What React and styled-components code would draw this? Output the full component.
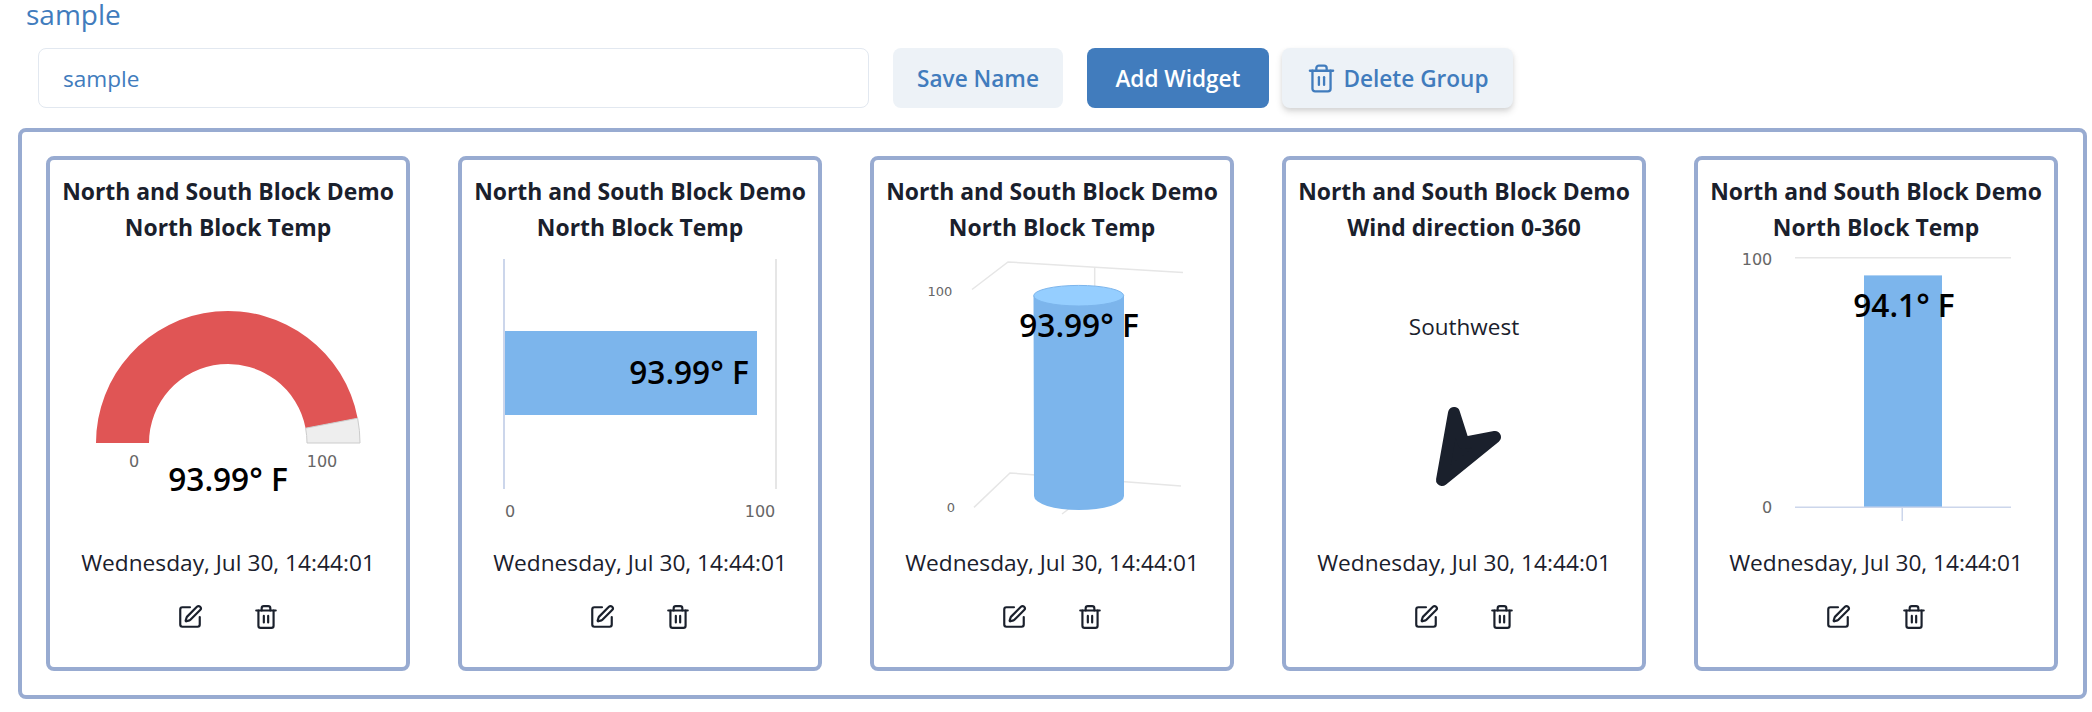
import React from "react";
import styled, { createGlobalStyle } from "styled-components";
import { SquarePen, Trash2 } from "lucide-react";

const FONT = `"Open Sans", "Noto Sans", "Liberation Sans", sans-serif`;
const BLUE = "#417cbd";
const BAR = "#7cb5ec";

const Global = createGlobalStyle`
  html, body { margin: 0; padding: 0; background: #fff; }
  body { font-family: ${FONT}; color: #1a202c; }
`;

const Page = styled.div`
  width: 2092px;
  height: 712px;
  overflow: hidden;
`;
const GroupTitle = styled.h2`
  margin: 0;
  height: 48px;
  padding: 0 0 0 26px;
  font-size: 28px;
  line-height: 28px;
  font-weight: 400;
  color: ${BLUE};
`;
const Toolbar = styled.div`
  display: flex;
  align-items: stretch;
  height: 60px;
  margin: 0 0 20px 38px;
`;
const NameInput = styled.input`
  box-sizing: border-box;
  width: 831px;
  height: 60px;
  padding: 0 24px;
  margin-right: 24px;
  border: 1.5px solid #e2e8f0;
  border-radius: 8px;
  outline: none;
  font: 400 22.6px ${FONT};
  color: ${BLUE};
`;
const Button = styled.button`
  box-sizing: border-box;
  display: flex;
  align-items: center;
  justify-content: center;
  gap: 6px;
  width: ${(p) => p.$w}px;
  margin-right: ${(p) => p.$mr || 0}px;
  padding: 0;
  border: 0;
  border-radius: 8px;
  font: 600 22.6px ${FONT};
  background: ${(p) => (p.$primary ? BLUE : "#edf2f7")};
  color: ${(p) => (p.$primary ? "#fff" : BLUE)};
  box-shadow: ${(p) => (p.$raised ? "0 4px 7px rgba(0,0,0,.13), 0 2px 4px rgba(0,0,0,.06)" : "none")};
`;
const Panel = styled.section`
  box-sizing: border-box;
  width: 2069px;
  height: 571px;
  margin-left: 18px;
  padding: 24px;
  border: 4px solid #98abd1;
  border-radius: 8px;
  display: grid;
  grid-template-columns: repeat(5, 364px);
  column-gap: 48px;
`;
const Card = styled.article`
  box-sizing: border-box;
  height: 515px;
  border: 4px solid #98abd1;
  border-radius: 8px;
  padding-top: 14px;
  display: flex;
  flex-direction: column;
  align-items: center;
`;
const CardTitle = styled.h3`
  margin: 0;
  height: 76px;
  font-size: 22.9px;
  line-height: 36px;
  font-weight: 700;
  text-align: center;
  white-space: nowrap;
  color: #1a202c;
`;
const ChartBox = styled.div`
  position: relative;
  width: 356px;
  height: 280px;
`;
const ChartSvg = styled.svg`
  display: block;
  width: 356px;
  height: 280px;
`;
const AxisText = styled.text`
  font-family: "DejaVu Sans", sans-serif;
  font-size: ${(p) => p.$size || 16}px;
  fill: #666;
  text-anchor: middle;
  dominant-baseline: central;
`;
const Value = styled.div`
  position: absolute;
  left: ${(p) => p.$x}px;
  top: ${(p) => p.$y}px;
  transform: translate(-50%, -50%);
  font-size: 31.6px;
  line-height: 40px;
  font-weight: 600;
  color: #000;
  white-space: nowrap;
`;
const Direction = styled.div`
  position: absolute;
  left: 178px;
  top: 77px;
  transform: translate(-50%, -50%);
  font-size: 22.5px;
  line-height: 30px;
  white-space: nowrap;
`;
const Timestamp = styled.div`
  margin-top: 17px;
  font-size: 22.7px;
  line-height: 32px;
  white-space: nowrap;
`;
const Actions = styled.div`
  display: flex;
  gap: 50px;
  margin-top: 25px;
  color: #1a202c;
`;

const polar = (r, pct) => {
  const a = (pct / 100) * Math.PI;
  return [178 - r * Math.cos(a), 193 - r * Math.sin(a)];
};
const arcSeg = (R, r, from, to) => {
  const [a, b] = polar(R, from);
  const [c, d] = polar(R, to);
  const [e, f] = polar(r, to);
  const [g, h] = polar(r, from);
  return `M${a} ${b}A${R} ${R} 0 0 1 ${c} ${d}L${e} ${f}A${r} ${r} 0 0 0 ${g} ${h}Z`;
};

const Gauge = () => (
  <ChartBox>
    <ChartSvg viewBox="0 0 356 280">
      <path d={arcSeg(132, 79, 0, 93.99)} fill="#e05555" />
      <path d={arcSeg(132, 79, 93.99, 100)} fill="#eeeeee" stroke="#cccccc" strokeWidth="1" />
      <AxisText x="84" y="211">0</AxisText>
      <AxisText x="272" y="211">100</AxisText>
    </ChartSvg>
    <Value $x={178} $y={229}>93.99° F</Value>
  </ChartBox>
);

const HBar = () => (
  <ChartBox>
    <ChartSvg viewBox="0 0 356 280">
      <rect x="41" y="9" width="2" height="230" fill="#ccd6eb" />
      <rect x="313" y="9" width="2" height="230" fill="#e6e6e6" />
      <rect x="43" y="81" width="252" height="84" fill={BAR} />
      <AxisText x="48" y="261">0</AxisText>
      <AxisText x="298" y="261">100</AxisText>
    </ChartSvg>
    <Value $x={227} $y={122}>93.99° F</Value>
  </ChartBox>
);

const Cylinder = () => (
  <ChartBox>
    <ChartSvg viewBox="0 0 356 280">
      <g fill="none" stroke="#e6e6e6" strokeWidth="1.5">
        <path d="M98 39.5L134 12L309 22.6" />
        <path d="M100 257.4L136 223L307 236" />
        <path d="M220.7 17V60" />
        <path d="M188 264L196 258" />
      </g>
      <path d="M159.5 45.7L160 246A45 14 0 0 0 250 246L250 45.7Z" fill={BAR} />
      <ellipse cx="204.7" cy="45.7" rx="45" ry="10.3" fill="#95ceff" stroke={BAR} strokeWidth="1" />
      <AxisText $size={13} x="66" y="41">100</AxisText>
      <AxisText $size={13} x="77" y="257">0</AxisText>
    </ChartSvg>
    <Value $x={205} $y={75}>93.99° F</Value>
  </ChartBox>
);

const Wind = () => (
  <ChartBox>
    <Direction>Southwest</Direction>
    <ChartSvg viewBox="0 0 356 280">
      <path
        d="M168 163L177.6 193L209 187L156 230Z"
        fill="#1a202c"
        stroke="#1a202c"
        strokeWidth="12"
        strokeLinejoin="round"
      />
    </ChartSvg>
  </ChartBox>
);

const VBar = () => (
  <ChartBox>
    <ChartSvg viewBox="0 0 356 280">
      <rect x="97" y="7" width="216" height="1.5" fill="#e6e6e6" />
      <rect x="166" y="25.4" width="78" height="231.6" fill={BAR} />
      <rect x="97" y="256.5" width="216" height="1.5" fill="#ccd6eb" />
      <rect x="203.5" y="258" width="1.5" height="13" fill="#ccd6eb" />
      <AxisText x="59" y="9">100</AxisText>
      <AxisText x="69" y="257">0</AxisText>
    </ChartSvg>
    <Value $x={206} $y={55}>94.1° F</Value>
  </ChartBox>
);

const widgets = [
  { sub: "North Block Temp", Chart: Gauge },
  { sub: "North Block Temp", Chart: HBar },
  { sub: "North Block Temp", Chart: Cylinder },
  { sub: "Wind direction 0-360", Chart: Wind },
  { sub: "North Block Temp", Chart: VBar },
];

export default function App() {
  return (
    <Page>
      <Global />
      <GroupTitle>sample</GroupTitle>
      <Toolbar>
        <NameInput defaultValue="sample" />
        <Button $w={170} $mr={24}>Save Name</Button>
        <Button $w={182} $mr={13} $primary>Add Widget</Button>
        <Button $w={231} $raised>
          <Trash2 size={31} strokeWidth={1.8} />
          Delete Group
        </Button>
      </Toolbar>
      <Panel>
        {widgets.map(({ sub, Chart }, i) => (
          <Card key={i}>
            <CardTitle>
              North and South Block Demo
              <br />
              {sub}
            </CardTitle>
            <Chart />
            <Timestamp>Wednesday, Jul 30, 14:44:01</Timestamp>
            <Actions>
              <SquarePen size={26} strokeWidth={2} />
              <Trash2 size={26} strokeWidth={2} />
            </Actions>
          </Card>
        ))}
      </Panel>
    </Page>
  );
}
